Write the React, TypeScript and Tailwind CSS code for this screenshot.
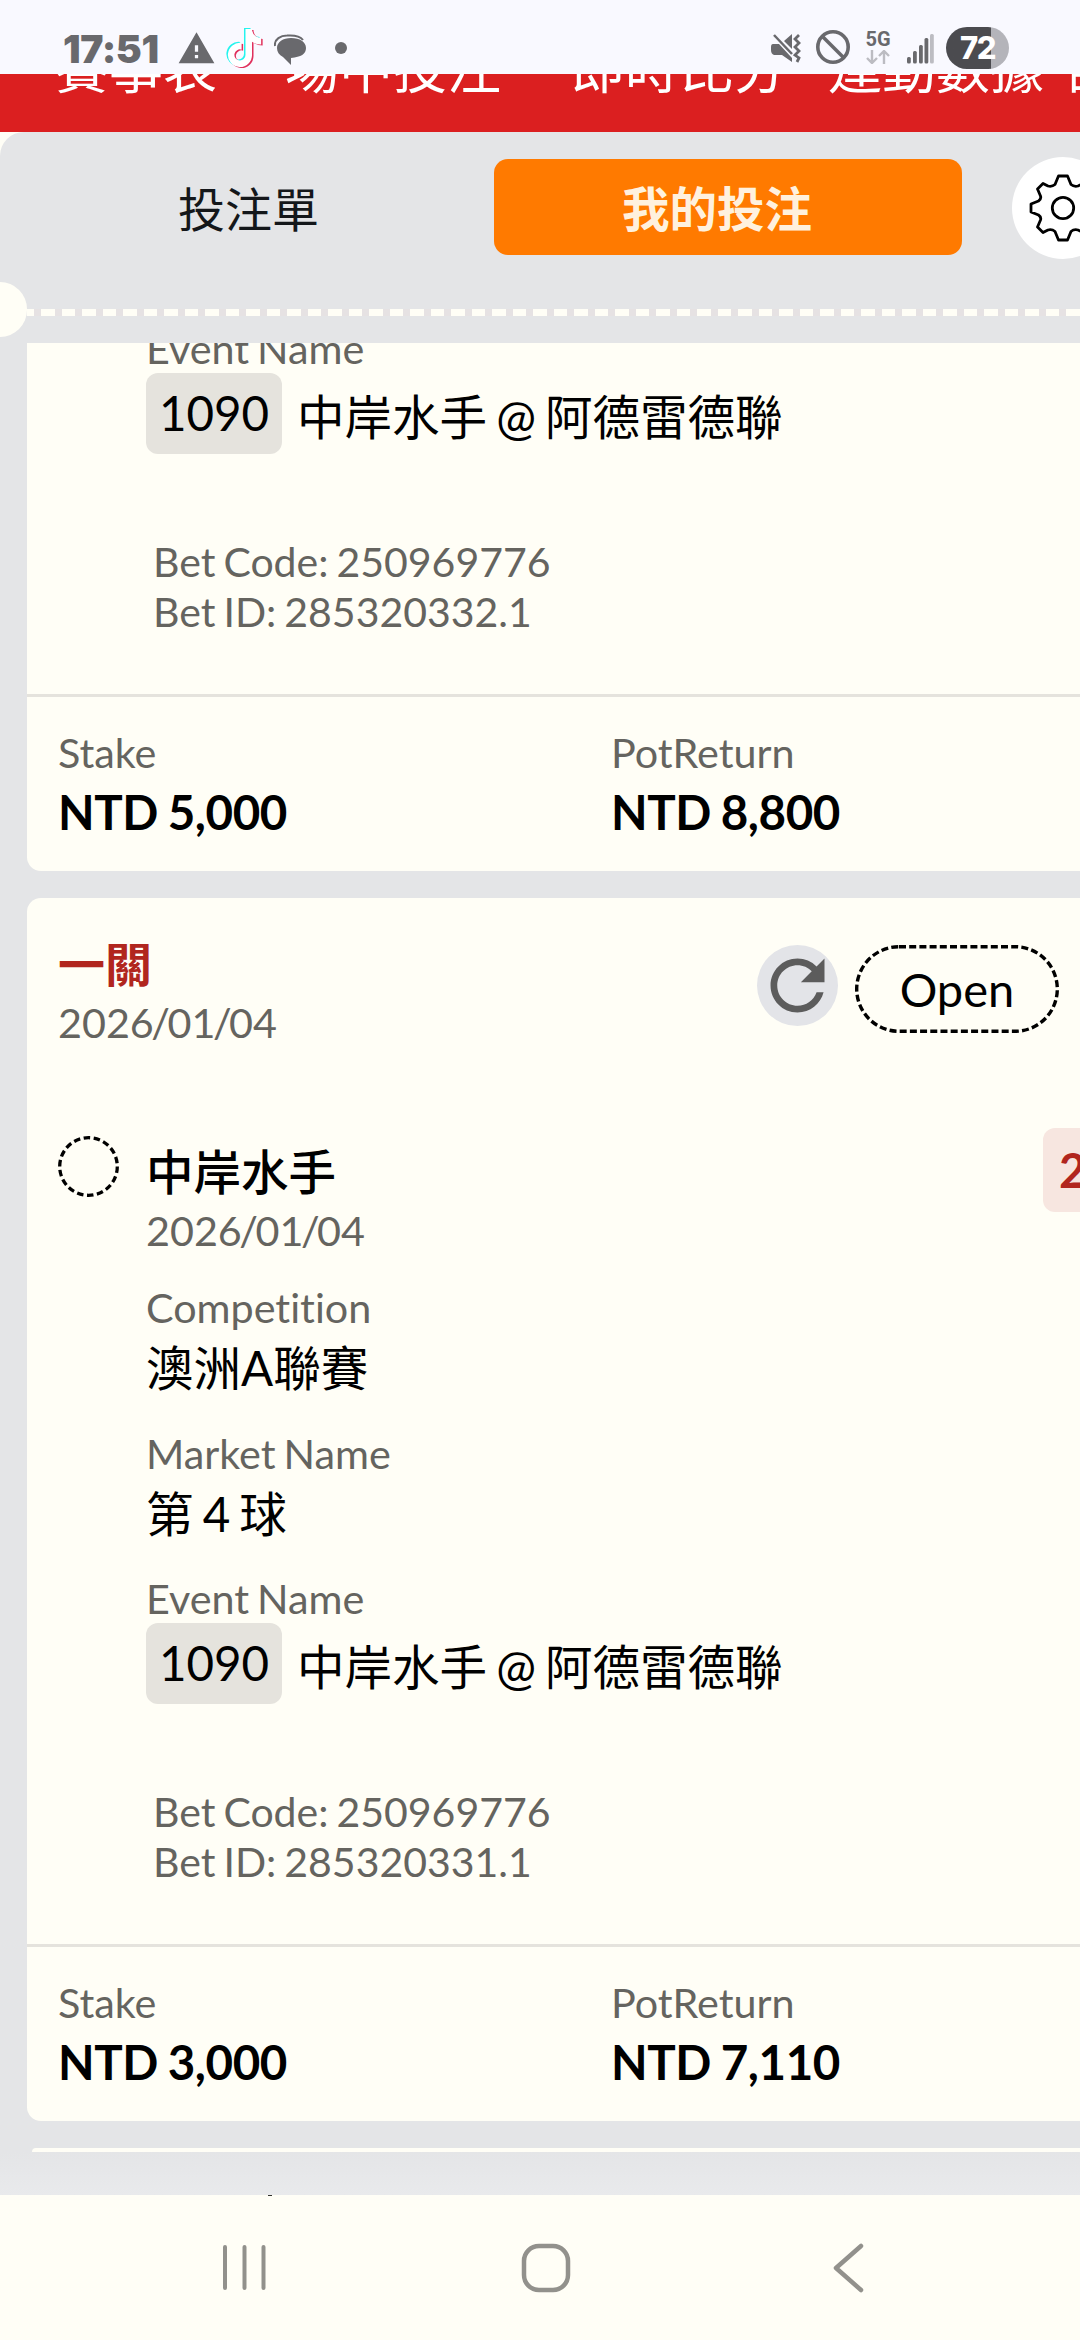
import React from 'react';
import { MdRefresh, MdWarning } from 'react-icons/md';
import { FaTiktok } from 'react-icons/fa';

interface Bet {
    betId: string;
    stake: string;
    potReturn: string;
    scrolled?: boolean;
}

const bets: Bet[] = [
    { betId: '285320332.1', stake: 'NTD 5,000', potReturn: 'NTD 8,800', scrolled: true },
    { betId: '285320331.1', stake: 'NTD 3,000', potReturn: 'NTD 7,110' },
];

const StatusBar: React.FC = () => (
    <div className="relative z-10 h-[74px] bg-[#f9f9ff] flex items-start shrink-0 text-[#69696d]">
        <span className="ml-[63px] mt-[27px] w-[97px] text-[39px] leading-[44px] font-black font-[Inter,sans-serif] tracking-[-0.4px] whitespace-nowrap">17:51</span>
        <MdWarning className="ml-[17px] mt-[29px] w-[39px] h-[39px]" />
        {/* TikTok note with its cyan and red offsets */}
        <div className="relative ml-[10px] mt-[28px] w-[36px] h-[40px]">
            <FaTiktok className="absolute left-[-1px] top-0 w-[36px] h-[38px] text-[#25f4ee]" />
            <FaTiktok className="absolute left-[2px] top-[2px] w-[36px] h-[38px] text-[#e0305c]" />
            <FaTiktok className="absolute left-[1px] top-[1px] w-[35px] h-[38px] text-white" />
        </div>
        <svg className="ml-[12px] mt-[34px] w-[33px] h-[32px]" viewBox="0 0 33 32" fill="none">
            <path d="M1 12C0 5 7 1.5 13 1.5C20 1 26 2 29 6" stroke="currentColor" strokeWidth="2" />
            <path d="M17 4C26 4 32 8 32 14C32 20 27 23 17 24V31L9 23C5 21 3 18 3 14C3 8 9 4 17 4Z" fill="currentColor" />
        </svg>
        <div className="ml-[28px] mt-[42px] w-3 h-3 rounded-full bg-[#69696d]" />
        <svg className="ml-[424px] mt-[33px] w-[30px] h-[30px]" viewBox="0 0 30 30" fill="none">
            <path d="M2 11H8L21 25V29L11 22H3Q0 21 0 17V14Q0 11 2 11ZM13 8L21 1V16Z" fill="currentColor" />
            <path d="M3 2L21 21" stroke="currentColor" strokeWidth="2.5" />
            <path d="M28 2L24 6L28 10L24 14L28 18L24 22L28 25L26 29" stroke="currentColor" strokeWidth="2.8" />
        </svg>
        <svg className="ml-[15px] mt-[30px] w-[34px] h-[34px]" viewBox="0 0 34 34" fill="none" stroke="currentColor" strokeWidth="3.6">
            <circle cx="17" cy="17" r="15.2" />
            <path d="M6 6L28 28" />
        </svg>
        <div className="ml-[15px] mt-[31px] w-[26px] flex flex-col items-center">
            <span className="text-[20px] leading-[17px] font-bold font-[Roboto,sans-serif]">5G</span>
            <svg className="mt-[2px] w-6 h-[14px] text-[#bcbcc2]" viewBox="0 0 24 14" fill="none" stroke="currentColor" strokeWidth="2.4">
                <path d="M6 0V13M1 8L6 13L11 8M18 14V1M13 6L18 1L23 6" />
            </svg>
        </div>
        <svg className="ml-[16px] mt-[34px] w-[27px] h-[30px]" viewBox="0 0 27 30" fill="currentColor">
            <rect x="0" y="23" width="3.8" height="6.5" rx="1.5" />
            <rect x="6" y="17" width="3.8" height="12.5" rx="1.5" />
            <rect x="12" y="11" width="3.8" height="18.5" rx="1.5" />
            <rect x="17.500" y="4" width="3.8" height="25.5" rx="1.5" />
            <rect x="23" y="0" width="3.8" height="29.5" rx="1.5" fill="#bcbcc2" />
        </svg>
        <div className="ml-[12px] mt-[27px] w-[63px] h-[42px] rounded-full bg-gradient-to-r from-[#4b4b4f] from-[71%] to-[#b4b4ba] to-[71%] flex items-center justify-center">
            <span className="text-[31px] leading-[42px] font-extrabold font-[Inter,sans-serif] text-white tracking-[-1.5px]">72</span>
        </div>
    </div>
);

const GearIcon: React.FC = () => (
    <svg className="w-[68px] h-[68px] shrink-0" viewBox="-34 -34 68 68" fill="none" stroke="black" strokeWidth="2.8" strokeLinejoin="round">
        <path d="M-4.500 -32H4.500L8 -23.500Q11 -21 15 -22L20 -24.500L25.500 -19L22.500 -12Q21.500 -9 24.500 -7L32 -4V4L24.500 7Q21.500 9 22.500 12L25.500 19L20 24.500L15 22Q11 21 8 23.500L4.500 32H-4.500L-8 23.500Q-11 21 -15 22L-20 24.500L-25.500 19L-22.500 12Q-21.500 9 -24.500 7L-32 4V-4L-24.500 -7Q-21.500 -9 -22.500 -12L-25.500 -19L-20 -24.500L-15 -22Q-11 -21 -8 -23.500Z" />
        <circle r="10.700" />
    </svg>
);

const Label: React.FC<{ children: React.ReactNode }> = ({ children }) => (
    <p className="text-[41.3px] leading-[57px] h-[56px] [word-spacing:-2.5px] text-[#65645f]">{children}</p>
);

const BetDate: React.FC = () => (
    <Label>
        2026<span className="-mx-[2.5px]">/</span>01<span className="-mx-[2.5px]">/</span>04
    </Label>
);

const Field: React.FC<{ label: string; children: React.ReactNode }> = ({ label, children }) => (
    <div className="h-[145.5px]">
        <Label>{label}</Label>
        <p className="text-[47.5px] leading-[65px] [word-spacing:-3px]">{children}</p>
    </div>
);

const Amount: React.FC<{ label: string; value: string }> = ({ label, value }) => (
    <div className="w-[553px] shrink-0">
        <Label>{label}</Label>
        <p className="text-[47.5px] leading-[64px] tracking-[-0.4px] [word-spacing:-1.5px] font-bold">{value}</p>
    </div>
);

const BetCard: React.FC<{ bet: Bet }> = ({ bet }) => (
    <div className={`w-[1180px] shrink-0 bg-[#fffef6] ${bet.scrolled ? 'h-[528px] rounded-b-[14px]' : 'h-[1223px] rounded-[14px]'}`}>
        {!bet.scrolled && (
            <>
                <div className="h-[232px] pl-[31px] pt-[36px] flex items-start">
                    <div className="w-[699px]">
                        <p className="text-[47px] leading-[60px] font-bold text-[#b1261e]">一關</p>
                        <BetDate />
                    </div>
                    <div className="mt-[11px] w-[81px] h-[81px] rounded-full bg-[#e3e4e8] flex items-center justify-center">
                        <MdRefresh className="w-[81px] h-[81px] text-[#5c5c5c]" />
                    </div>
                    <div className="relative ml-[17px] mt-[11px] w-[204px] h-[88px] flex items-center justify-center">
                        <svg className="absolute inset-0 w-[204px] h-[88px]" viewBox="0 0 204 88" fill="none" stroke="black" strokeWidth="3.4" strokeDasharray="7 3.2">
                            <rect x="1.700" y="1.700" width="200.600" height="84.600" rx="42.300" />
                        </svg>
                        <span className="text-[47px] leading-[56px]">Open</span>
                    </div>
                </div>
                <div className="pl-[31px] h-[149px] flex items-start">
                    <svg className="mt-[6px] w-[61px] h-[61px]" viewBox="0 0 61 61" fill="none" stroke="black" strokeWidth="3.3" strokeDasharray="6.500 3.550">
                        <circle cx="30.500" cy="30.500" r="28.800" />
                    </svg>
                    <div className="ml-[27px] mt-[10px] w-[897px]">
                        <p className="text-[47.5px] leading-[63px] h-[62px] font-medium">中岸水手</p>
                        <BetDate />
                    </div>
                    <div className="-mt-[2px] w-[130px] h-[84px] rounded-xl bg-[#f7e6e0] pl-4 flex items-center">
                        <span className="text-[47px] leading-[56px] font-bold text-[#b1261e]">2</span>
                    </div>
                </div>
                <div className="pl-[119px]">
                    <Field label="Competition">澳洲A聯賽</Field>
                    <Field label="Market Name">第 4 球</Field>
                </div>
            </>
        )}
        <div className={`pl-[119px] h-[374px] ${bet.scrolled ? '-mt-[23px]' : ''}`}>
            <Label>Event Name</Label>
            <div className="-mt-[3px] flex items-center">
                <div className="w-[136px] h-[81px] rounded-xl bg-[#e5e3dd] flex items-start justify-center">
                    <span className="text-[47.5px] leading-[80px]">1090</span>
                </div>
                <span className="ml-[15px] mt-[6px] text-[47.5px] leading-[62px] [word-spacing:-3px]">中岸水手 @ 阿德雷德聯</span>
            </div>
            <p className="pl-[7px] mt-[83px] text-[41px] leading-[50px] [word-spacing:-2.5px] text-[#65645f]">Bet Code: 250969776</p>
            <p className="pl-[7px] text-[41px] leading-[50px] [word-spacing:-2.5px] text-[#65645f]">Bet ID: {bet.betId}</p>
        </div>
        <div className="border-t-[3px] border-[#e5e3dd] pt-[27px] pl-[31px] flex">
            <Amount label="Stake" value={bet.stake} />
            <Amount label="PotReturn" value={bet.potReturn} />
        </div>
    </div>
);

const App: React.FC = () => {
    return (
        <div className="w-[1080px] h-[2340px] overflow-hidden flex flex-col bg-[#fffef6] text-black [font-variant-ligatures:none] font-[Lato,'Noto_Sans_CJK_TC',sans-serif]">
            <StatusBar />

            {/* Site navigation, partly under the status bar */}
            <nav className="h-[58px] shrink-0 bg-[#db1f20] overflow-hidden">
                <div className="-mt-[36px] ml-[55px] flex text-[54px] leading-[62px] text-white whitespace-nowrap">
                    <span className="w-[230px] shrink-0">賽事表</span>
                    <span className="w-[286px] shrink-0">場中投注</span>
                    <span className="w-[257px] shrink-0">即時比分</span>
                    <span className="w-[238px] shrink-0">運動數據</span>
                    <span className="shrink-0">部</span>
                </div>
            </nav>

            <div className="h-[211px] shrink-0 rounded-tl-[24px] bg-[#e4e5e7] overflow-hidden">
                <div className="h-[150px] flex items-start pt-[25px]">
                    <button className="mt-[2px] w-[494px] h-[96px] pt-[4px] pl-[3px] shrink-0 text-[47px] text-[#14171a]">投注單</button>
                    <button className="mt-[2px] w-[468px] h-[96px] pt-[4px] pr-[22px] shrink-0 rounded-[14px] bg-[#ff7a00] text-[47.5px] font-bold text-[#fff1de]">我的投注</button>
                    <button className="ml-[50px] w-[102px] h-[102px] shrink-0 rounded-full bg-white flex items-center justify-center">
                        <GearIcon />
                    </button>
                </div>
                {/* Ticket notch and perforation */}
                <div className="h-[55px] flex items-center">
                    <div className="w-[27px] h-[55px] rounded-r-full bg-[#fffef6]" />
                    <div className="flex-1 mt-[6px] h-[7px] bg-[repeating-linear-gradient(90deg,#fffef6_0px,#fffef6_7px,#e6e2e3_7px,#e6e2e3_14px,#fffef6_14px,#fffef6_20.5px)]" />
                </div>
            </div>

            <main className="h-[1852px] shrink-0 overflow-hidden bg-[#e4e5e7] flex flex-col">
                <div className="pl-[27px] flex flex-col gap-[27px]">
                    {bets.map(bet => (
                        <BetCard key={bet.betId} bet={bet} />
                    ))}
                    <div className="ml-[5px] h-[4px] shrink-0 rounded-tl-[4px] bg-[#fffef6]" />
                </div>
                <div className="flex-1 bg-gradient-to-b from-[#e4e5e7] to-[#e9eaec]" />
            </main>

            {/* Android navigation */}
            <div className="h-[145px] shrink-0 flex items-start text-[#92918c]">
                <div className="ml-[268px] w-[4px] h-[1px] bg-[#33332f]" />
                <svg className="-ml-[50px] mt-[49px] w-[46px] h-[48px]" viewBox="0 0 46 48" stroke="currentColor" strokeWidth="4" strokeLinecap="round">
                    <path d="M3 3V44M22.500 3V44M41.500 3V44" />
                </svg>
                <svg className="ml-[253px] mt-[48px] w-[50px] h-[50px]" viewBox="0 0 50 50" fill="none" stroke="currentColor" strokeWidth="4.500">
                    <rect x="3" y="3" width="44" height="44" rx="15" />
                </svg>
                <svg className="ml-[262px] mt-[48px] w-[32px] h-[50px]" viewBox="0 0 32 50" fill="none" stroke="currentColor" strokeWidth="4.500" strokeLinecap="round" strokeLinejoin="round">
                    <path d="M28 3L3 25L28 47" />
                </svg>
            </div>
        </div>
    );
};

export default App;
